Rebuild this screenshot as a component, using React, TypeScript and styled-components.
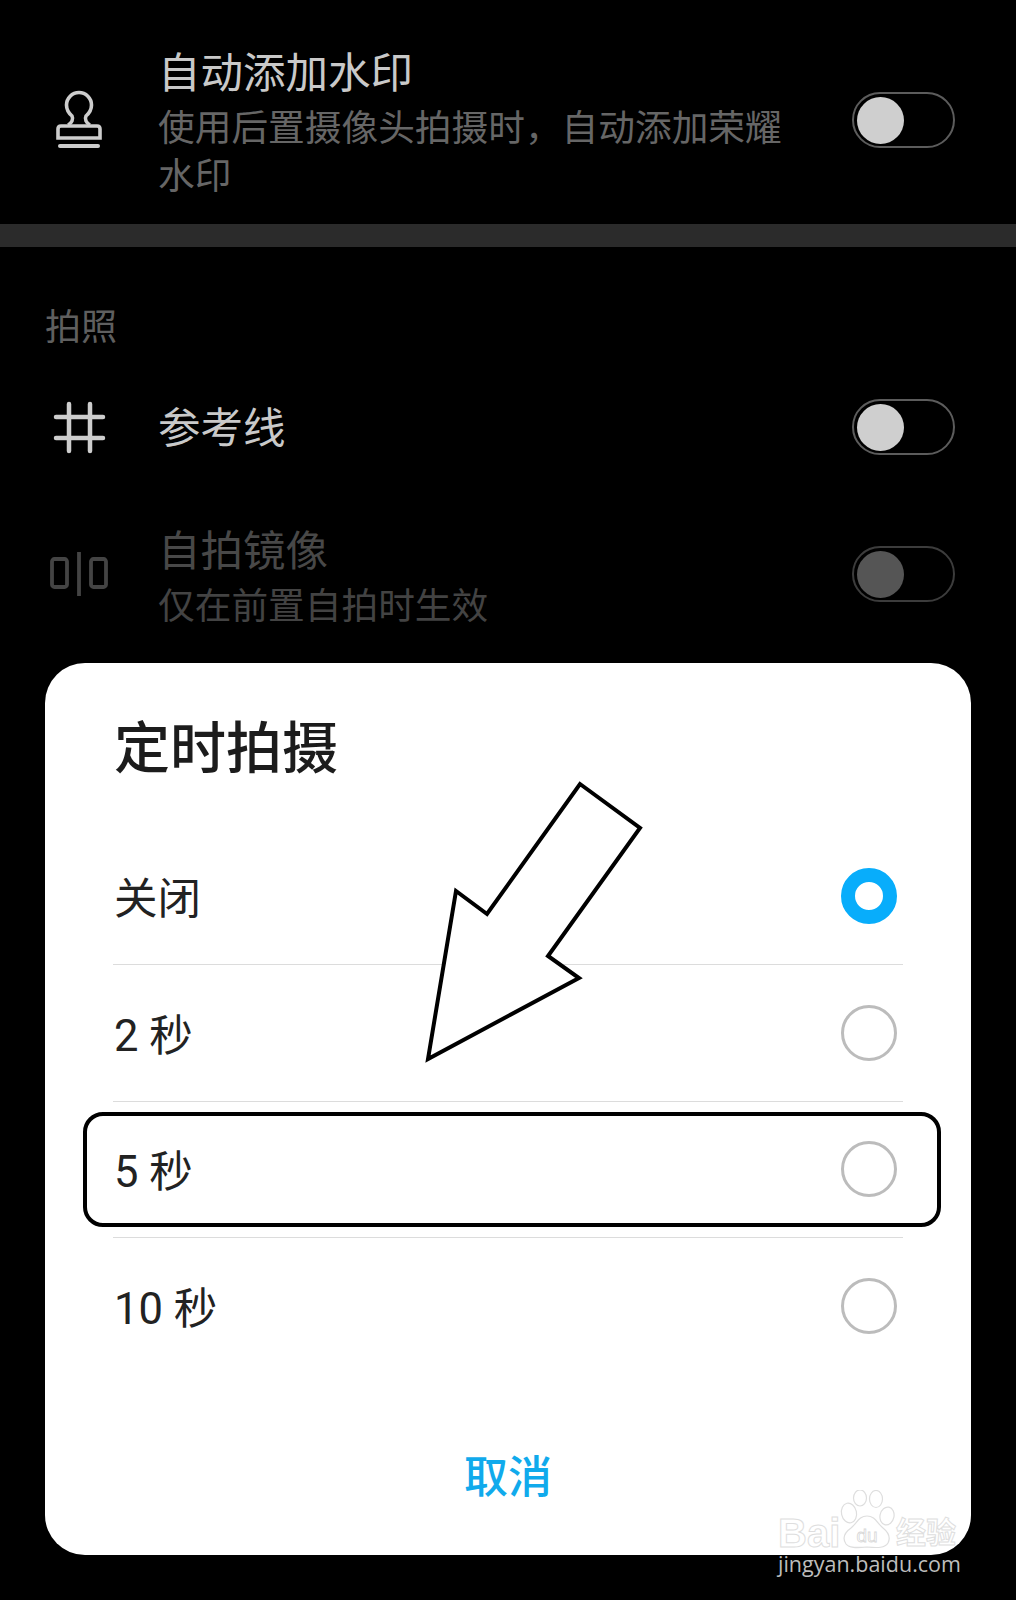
import React from "react";
import styled, { createGlobalStyle } from "styled-components";

const GlobalStyle = createGlobalStyle`
  html, body {
    margin: 0;
    padding: 0;
    background: #000;
  }
  * {
    box-sizing: border-box;
  }
`;

const Page = styled.div`
  position: relative;
  width: 1016px;
  height: 1600px;
  overflow: hidden;
  background: #000;
  font-family: Roboto, "Noto Sans CJK SC", sans-serif;
`;

const Row = styled.div<{ $top: number; $height: number; $pad?: number }>`
  display: flex;
  align-items: center;
  height: ${({ $height }) => $height}px;
  margin-top: ${({ $top }) => $top}px;
  padding-top: ${({ $pad }) => $pad ?? 0}px;
  padding-right: 61px;
`;

const IconBox = styled.div`
  display: flex;
  justify-content: center;
  align-items: center;
  flex: 0 0 158px;
`;

const RowText = styled.div`
  flex: 1;
  min-width: 0;
  padding: 10px 56px 0 0;
`;

const RowTitle = styled.div<{ $dim?: boolean }>`
  font-size: 42.5px;
  line-height: 50px;
  color: ${({ $dim }) => ($dim ? "#484848" : "#c9c9c9")};
  margin-bottom: 6px;
`;

const RowSub = styled.div<{ $dim?: boolean }>`
  font-size: 36.7px;
  line-height: 48px;
  color: ${({ $dim }) => ($dim ? "#434343" : "#666")};
`;

const Toggle = styled.div<{ $dim?: boolean }>`
  display: flex;
  align-items: center;
  flex: 0 0 103px;
  height: 56px;
  padding-left: 3px;
  border: 2.5px solid ${({ $dim }) => ($dim ? "#3c3c3c" : "#5c5c5c")};
  border-radius: 28px;
`;

const Thumb = styled.div<{ $dim?: boolean }>`
  width: 47px;
  height: 47px;
  border-radius: 50%;
  background: ${({ $dim }) => ($dim ? "#555" : "#cfcfcf")};
`;

const Divider = styled.div`
  height: 23px;
  background: #2b2b2b;
`;

const SectionLabel = styled.div`
  margin: 58px 0 0 45px;
  font-size: 36px;
  line-height: 46px;
  color: #5f5f5f;
`;

const Dialog = styled.div`
  display: flex;
  flex-direction: column;
  width: 926px;
  height: 892px;
  margin: 23.5px 0 0 45px;
  padding: 52px 68px 0 68px;
  border-radius: 40px;
  background: #fff;
`;

const DialogTitle = styled.div`
  padding-left: 1px;
  font-size: 56px;
  line-height: 68px;
  font-weight: 500;
  color: #1c1c1c;
`;

const OptionList = styled.div`
  margin-top: 46px;
`;

const Option = styled.div<{ $last?: boolean }>`
  display: flex;
  align-items: center;
  justify-content: space-between;
  height: 136.5px;
  padding-right: 6px;
  border-bottom: ${({ $last }) => ($last ? "0" : "1.5px solid #dcdcdc")};
`;

const OptionLabel = styled.span`
  padding: 8px 0 0 1px;
  font-size: 43.5px;
  line-height: 50px;
  color: #222;
`;

const Radio = styled.div<{ $checked?: boolean }>`
  width: 56px;
  height: 56px;
  border-radius: 50%;
  border: ${({ $checked }) => ($checked ? "14px solid #08adfb" : "3px solid #bcbcbc")};
  background: #fff;
`;

const CancelButton = styled.div`
  margin-top: 76px;
  text-align: center;
  font-size: 44px;
  line-height: 54px;
  font-weight: 500;
  color: #10aaec;
`;

const Highlight = styled.div`
  position: absolute;
  left: 83px;
  top: 1112px;
  width: 858px;
  height: 115px;
  border: 4px solid #000;
  border-radius: 20px;
`;

const ArrowSvg = styled.svg`
  position: absolute;
  left: 420px;
  top: 775px;
`;

const Watermark = styled.div`
  position: absolute;
  left: 778px;
  top: 1490px;
  width: 182px;
`;

const LogoLine = styled.div`
  display: flex;
  align-items: flex-end;
  height: 60px;
`;

const LogoText = styled.span<{ $size: number; $width: number }>`
  width: ${({ $width }) => $width}px;
  font-family: "Liberation Sans", "Noto Sans CJK SC", sans-serif;
  font-size: ${({ $size }) => $size}px;
  line-height: 34px;
  font-weight: 700;
  color: #fff;
  -webkit-text-stroke: 1px #dedede;
  white-space: nowrap;
`;

const Domain = styled.div`
  margin-top: 1px;
  font-family: "Open Sans", sans-serif;
  font-size: 21.5px;
  line-height: 26px;
  text-align: center;
  color: #bdbdbd;
`;

const options = ["关闭", "2 秒", "5 秒", "10 秒"];

function StampIcon() {
  return (
    <svg width="56" height="62" viewBox="21 30 56 62" fill="none" stroke="#cdcdcd" strokeWidth="3.6">
      <path d="M38 66C42 64 43.500 60 42 57C38.500 54 36.500 50 36.500 46a12.500 12.500 0 1 1 25 0C61.500 50 59.500 54 56 57C54.500 60 56 64 60 66" />
      <path d="M28 79V70q0-3 3-3h36q3 0 3 3v9Z" />
      <path d="M30 87H68" strokeWidth="4" strokeLinecap="round" />
    </svg>
  );
}

function GridIcon() {
  return (
    <svg width="53" height="53" viewBox="0 0 53 53" fill="none" stroke="#cdcdcd" strokeWidth="4.500" strokeLinecap="round">
      <path d="M16 3V50M37 3V50M3 16H50M3 37H50" />
    </svg>
  );
}

function MirrorIcon() {
  return (
    <svg width="58" height="46" viewBox="0 0 58 46" fill="none" stroke="#444" strokeWidth="3.800">
      <rect x="2" y="8" width="15" height="28" rx="2.500" />
      <rect x="41" y="8" width="15" height="28" rx="2.500" />
      <path d="M29 1V45" />
    </svg>
  );
}

function PawMark() {
  return (
    <svg width="58" height="60" viewBox="0 0 58 60" fill="#fff" stroke="#dedede" strokeWidth="1.200">
      <ellipse cx="11" cy="23" rx="7.500" ry="10" transform="rotate(-12 11 23)" />
      <ellipse cx="22" cy="8" rx="6.500" ry="8" />
      <ellipse cx="38" cy="9" rx="6.500" ry="8.500" />
      <ellipse cx="49" cy="26" rx="7" ry="9" transform="rotate(12 49 26)" />
      <path d="M29 26C21 26 19 33 13 38C6 43 4 48 8 54C11 58 18 58 29 57C40 58 47 58 50 53C53 47 50 42 45 38C39 33 37 26 29 26Z" />
      <text x="29" y="52" textAnchor="middle" fontFamily="Liberation Sans, sans-serif" fontSize="19" fill="#fff" stroke="#d8d8d8" strokeWidth="0.800">
        du
      </text>
    </svg>
  );
}

function App() {
  return (
    <Page>
      <GlobalStyle />
      <Row $top={0} $height={224} $pad={16}>
        <IconBox>
          <StampIcon />
        </IconBox>
        <RowText>
          <RowTitle>自动添加水印</RowTitle>
          <RowSub>使用后置摄像头拍摄时，自动添加荣耀水印</RowSub>
        </RowText>
        <Toggle>
          <Thumb />
        </Toggle>
      </Row>
      <Divider />
      <SectionLabel>拍照</SectionLabel>
      <Row $top={11} $height={130}>
        <IconBox>
          <GridIcon />
        </IconBox>
        <RowText>
          <RowTitle>参考线</RowTitle>
        </RowText>
        <Toggle>
          <Thumb />
        </Toggle>
      </Row>
      <Row $top={17} $height={130}>
        <IconBox>
          <MirrorIcon />
        </IconBox>
        <RowText>
          <RowTitle $dim>自拍镜像</RowTitle>
          <RowSub $dim>仅在前置自拍时生效</RowSub>
        </RowText>
        <Toggle $dim>
          <Thumb $dim />
        </Toggle>
      </Row>
      <Dialog>
        <DialogTitle>定时拍摄</DialogTitle>
        <OptionList>
          {options.map((label, i) => (
            <Option key={label} $last={i === options.length - 1}>
              <OptionLabel>{label}</OptionLabel>
              <Radio $checked={i === 0} />
            </Option>
          ))}
        </OptionList>
        <CancelButton>取消</CancelButton>
      </Dialog>
      <Highlight />
      <ArrowSvg width="226" height="290" viewBox="420 775 226 290">
        <polygon
          points="580,784 640,828 548,956 579,978 428,1059 456,891 487,914"
          fill="#fff"
          stroke="#000"
          strokeWidth="4"
        />
      </ArrowSvg>
      <Watermark>
        <LogoLine>
          <LogoText $size={40} $width={60}>Bai</LogoText>
          <PawMark />
          <LogoText $size={30} $width={64}>经验</LogoText>
        </LogoLine>
        <Domain>jingyan.baidu.com</Domain>
      </Watermark>
    </Page>
  );
}

export default App;
